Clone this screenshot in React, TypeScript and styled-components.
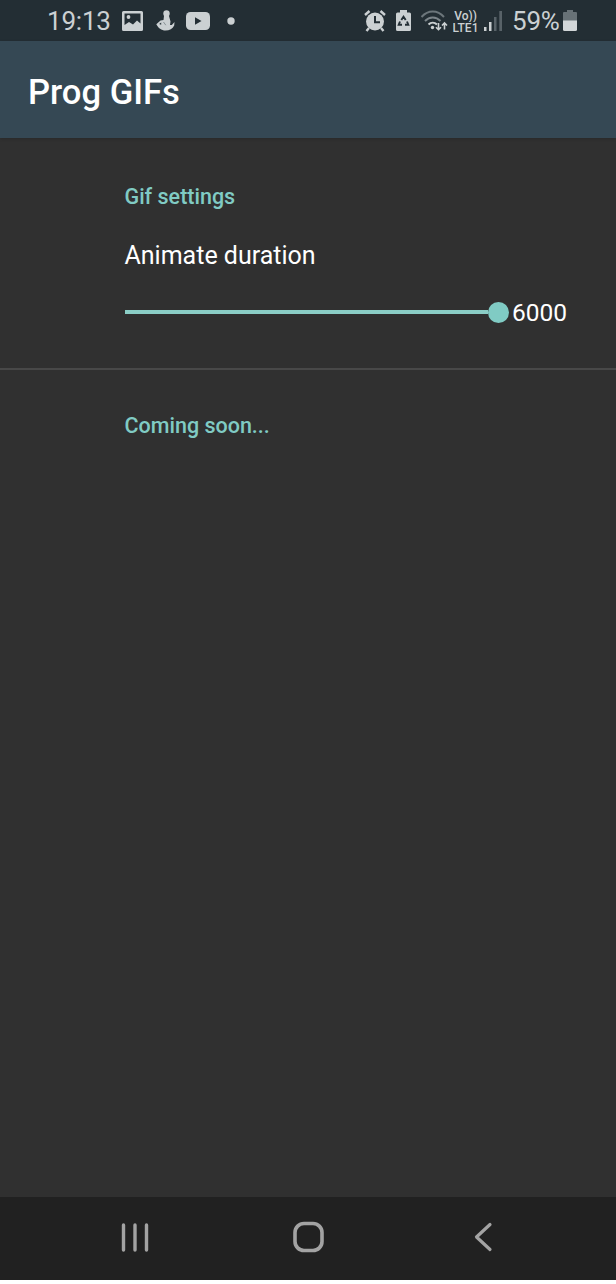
import React from 'react';
import styled, { createGlobalStyle } from 'styled-components';

const Global = createGlobalStyle`
  * { box-sizing: border-box; }
  body { margin: 0; background: #fff; font-family: Roboto, sans-serif; }
  svg { display: block; flex: none; }
`;

const Screen = styled.div`
  width: 616px;
  height: 1280px;
  display: flex;
  flex-direction: column;
  background: #303030;
`;

const StatusBar = styled.header`
  height: 41px;
  flex: none;
  display: flex;
  align-items: center;
  justify-content: space-between;
  padding: 0 39px 0 47px;
  background: #232e34;
  color: #cbd0d2;
`;

const StatusGroup = styled.div`
  display: flex;
  align-items: center;
  height: 41px;
`;

const StatusText = styled.span<{ $width: number; $left?: number }>`
  width: ${p => p.$width}px;
  margin-left: ${p => p.$left ?? 0}px;
  font-size: 26px;
  letter-spacing: -0.2px;
  line-height: 41px;
  padding-top: 2px;
  white-space: nowrap;
`;

const Icon = styled.svg<{ $left: number }>`
  margin-left: ${p => p.$left}px;
`;

const Lte = styled.div`
  width: 27px;
  margin-left: 4px;
  margin-right: 1px;
  padding-top: 2px;
  display: flex;
  flex-direction: column;
  align-items: center;
  font-size: 12px;
  font-weight: 500;
  white-space: nowrap;
`;

const LteLine = styled.span`
  height: 12px;
  line-height: 12px;
  overflow: hidden;
`;

const AppBar = styled.div`
  height: 97px;
  flex: none;
  display: flex;
  align-items: center;
  padding: 4px 28px 0;
  background: #354854;
  box-shadow: 0 1px 3px rgba(0, 0, 0, 0.15);
`;

const Title = styled.h1`
  margin: 0;
  font-size: 34.6px;
  font-weight: 500;
  line-height: 40px;
  color: #fff;
`;

const Settings = styled.main`
  flex: 1;
`;

const Section = styled.section<{ $top: number }>`
  padding: ${p => p.$top}px 0 0 124.5px;
`;

const Category = styled.h2`
  margin: 0;
  font-size: 21.5px;
  font-weight: 500;
  line-height: 28px;
  color: #80cbc4;
`;

const Label = styled.div`
  margin-top: 29px;
  font-size: 25px;
  line-height: 32px;
  color: #fff;
`;

const SliderRow = styled.div`
  display: flex;
  align-items: center;
  margin-top: 23px;
  height: 34px;
`;

const Track = styled.div`
  width: 384px;
  height: 34px;
  display: flex;
  align-items: center;
`;

const Fill = styled.div`
  flex: 1;
  height: 4px;
  background: #8bcec6;
`;

const Thumb = styled.div`
  width: 21px;
  height: 21px;
  border-radius: 50%;
  background: #80cbc4;
`;

const Value = styled.span`
  margin-left: 3.5px;
  padding-top: 2px;
  font-size: 24.5px;
  line-height: 32px;
  color: #fff;
`;

const Divider = styled.div`
  height: 2px;
  margin-top: 38.5px;
  background: #484848;
`;

const NavBar = styled.nav`
  height: 83px;
  flex: none;
  display: flex;
  align-items: center;
  justify-content: space-between;
  padding: 0 117px 3px;
  background: #212121;
`;

export default function App() {
  return (
    <>
      <Global />
      <Screen>
        <StatusBar>
          <StatusGroup>
            <StatusText $width={64}>19:13</StatusText>
            <Icon $left={11} width="21" height="20" viewBox="0 0 21 20">
              <path fill="#cbd0d2" fillRule="evenodd" d="M1.5 0h18A1.5 1.5 0 0 1 21 1.5v17a1.5 1.5 0 0 1-1.5 1.5h-18A1.5 1.5 0 0 1 0 18.5v-17A1.5 1.5 0 0 1 1.5 0ZM2.500 2.500V14l4.500-3 4 2.500 4-4 3.500 3V2.500Z" />
              <circle cx="6.500" cy="6" r="1.900" fill="#cbd0d2" />
            </Icon>
            <Icon $left={13} width="19" height="21" viewBox="0 0 19 21" fill="#cbd0d2">
              <circle cx="10.500" cy="3.400" r="3.200" />
              <path d="M8 6h5l1.500 5.500-.5 3.500h1.800L18.500 12l-.3 3.500c-1.700 3.200-4.500 5-8.700 5C5.500 20.500 2.200 18 .3 14.200L4.500 10.500l3-.5Z" />
              <path d="m3.200 14 2-1.500v2.300Z" fill="#232e34" />
              <path d="m7.500 12 2.300 3.200" fill="none" stroke="#8a9397" strokeWidth="1" />
            </Icon>
            <Icon $left={11} width="24" height="18" viewBox="0 0 24 18">
              <rect width="24" height="18" rx="4.500" fill="#cbd0d2" />
              <path d="M9 5.200v7.600l6.500-3.800Z" fill="#232e34" />
            </Icon>
            <Icon $left={17} width="8" height="8" viewBox="0 0 8 8">
              <circle cx="4" cy="4" r="3.700" fill="#cbd0d2" />
            </Icon>
          </StatusGroup>
          <StatusGroup>
            <Icon $left={0} width="22" height="22" viewBox="0 0 22 22" fill="none" stroke="#cbd0d2">
              <circle cx="11" cy="11.500" r="9" fill="#cbd0d2" stroke="none" />
              <path d="m1 5 4.500-4M21 5l-4.500-4M5 18l-2.500 3M17 18l2.500 3" strokeWidth="2.400" />
              <path d="M11 6v6.200h5" stroke="#232e34" strokeWidth="2" />
            </Icon>
            <Icon $left={10} width="15" height="21" viewBox="0 0 15 21">
              <path fill="#cbd0d2" d="M4 0h7v2.500h2.500A1.500 1.500 0 0 1 15 4v15.500a1.500 1.500 0 0 1-1.500 1.500h-12A1.500 1.500 0 0 1 0 19.500V4a1.500 1.500 0 0 1 1.500-1.500H4Z" />
              <path d="M5.300 10 7.500 6.800l2.200 3.200M11 11.500l1.300 3.200H9M4 11.500l-1.300 3.200H6" fill="none" stroke="#232e34" strokeWidth="1.900" />
            </Icon>
            <Icon $left={10} width="27" height="22" viewBox="0 0 27 22" fill="none">
              <path d="M.5 7c6.500-7.300 16-7.300 22.500 0" stroke="#6c767b" strokeWidth="2" />
              <path d="M4 11c4.500-4.800 11-4.800 15.500 0" stroke="#7c858a" strokeWidth="2" />
              <path d="M7.500 14.500c2.500-2.400 6-2.400 8.500 0" stroke="#cbd0d2" strokeWidth="2" />
              <circle cx="11.500" cy="17.500" r="1.700" fill="#cbd0d2" />
              <path d="M17.500 13v6.500m-2.500-2.300 2.500 2.500 2.500-2.500M23.500 19.500V13m-2.500 2.500 2.500-2.500 2.500 2.500" stroke="#cbd0d2" strokeWidth="1.600" />
            </Icon>
            <Lte>
              <LteLine>Vo))</LteLine>
              <LteLine>LTE1</LteLine>
            </Lte>
            <Icon $left={4} width="18" height="20" viewBox="0 0 18 20">
              <path d="M0 16h2.500v4H0ZM5 11h2.500v9H5Z" fill="#cbd0d2" />
              <path d="M10 6h2.500v14H10ZM15.300 0H18v20h-2.700Z" fill="#586268" />
            </Icon>
            <StatusText $width={50} $left={10}>59%</StatusText>
            <Icon $left={1} width="14" height="21" viewBox="0 0 14 21">
              <path d="M4 0h6v2h3q1 0 1 1v8H0V3q0-1 1-1h3Z" fill="#687277" />
              <path d="M0 10.500h14v9q0 1.500-1.500 1.500h-11Q0 21 0 19.500Z" fill="#d2d6d8" />
            </Icon>
          </StatusGroup>
        </StatusBar>
        <AppBar>
          <Title>Prog GIFs</Title>
        </AppBar>
        <Settings>
          <Section $top={45}>
            <Category>Gif settings</Category>
            <Label>Animate duration</Label>
            <SliderRow>
              <Track>
                <Fill />
                <Thumb />
              </Track>
              <Value>6000</Value>
            </SliderRow>
          </Section>
          <Divider />
          <Section $top={42.5}>
            <Category>Coming soon...</Category>
          </Section>
        </Settings>
        <NavBar>
          <svg width="36" height="34" viewBox="0 0 36 34" fill="none" stroke="#a3a3a3" strokeWidth="3.400" strokeLinecap="round">
            <path d="M6.500 5v25M18 5v25M29.500 5v25" />
          </svg>
          <svg width="36" height="34" viewBox="0 0 36 34" fill="none" stroke="#a3a3a3" strokeWidth="3.600">
            <rect x="5" y="3.500" width="27" height="27" rx="9" />
          </svg>
          <svg width="36" height="34" viewBox="0 0 36 34" fill="none" stroke="#a3a3a3" strokeWidth="3.200" strokeLinecap="round" strokeLinejoin="round">
            <path d="M27 4.500 13.500 17 27 29.500" />
          </svg>
        </NavBar>
      </Screen>
    </>
  );
}
